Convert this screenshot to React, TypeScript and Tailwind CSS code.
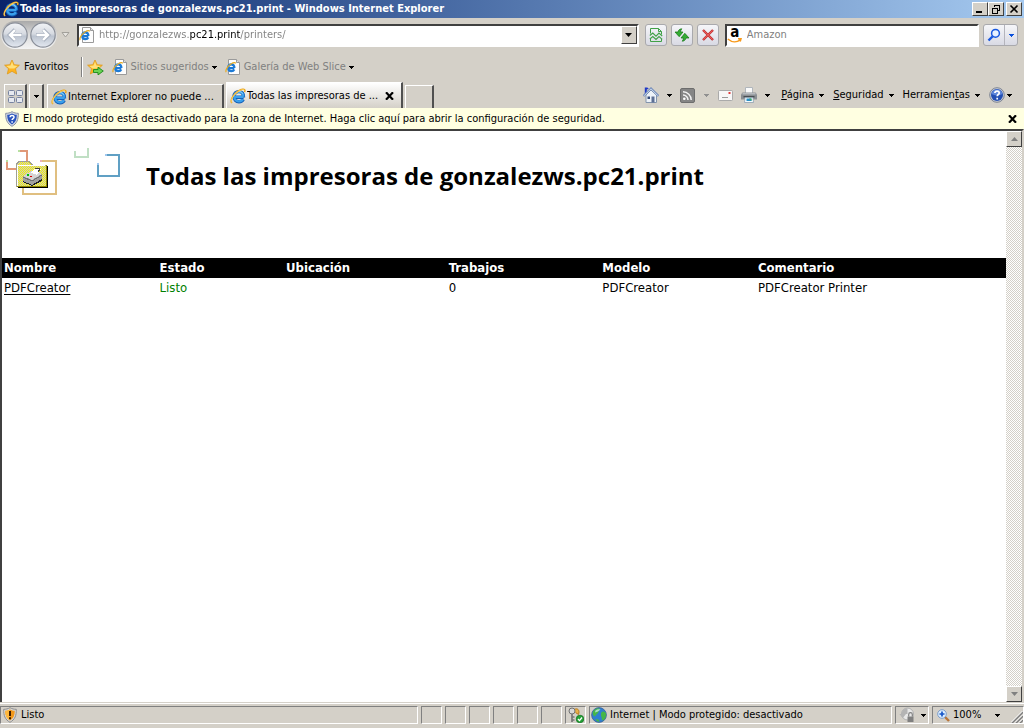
import React from "react";

type IconProps = { className?: string };

const inset = "border border-t-[#808080] border-l-[#808080] border-r-white border-b-white";
const raised = "border border-t-white border-l-white border-r-[#404040] border-b-[#404040]";

function IeIcon({ className = "size-4" }: IconProps) {
  return (
    <svg viewBox="0 0 16 16" className={`shrink-0 ${className}`} aria-hidden="true">
      <path d="M13.600 9.300H5M13.500 9.300C13.700 5.400 11.700 3.600 8.900 3.600 6 3.600 4 5.700 4 8.700c0 3 2 5 5 5 2.100 0 3.600-1 4.200-2.400" fill="none" stroke="#1460b8" strokeWidth="3.400" />
      <path d="M13.400 9H5M13.300 8.800C13.300 5.500 11.500 3.800 8.900 3.800 6.200 3.800 4.200 5.900 4.200 8.600c0 2.800 2 4.700 4.700 4.700 1.900 0 3.300-.8 3.900-2.100" fill="none" stroke="#3aa0ec" strokeWidth="2.200" />
      <path d="M4.300 7.200C4.900 5 6.700 3.500 8.900 3.500c1.800 0 3.200.8 3.900 2.200" fill="none" stroke="#9edcff" strokeWidth="1" />
      <path d="M2 15C-.4 13 2.800 6.400 8.400 3c3-1.900 6.200-2.500 6.500-.8.1.6-.1 1.300-.4 1.900" fill="none" stroke="#e9a31c" strokeWidth="1.500" />
      <path d="M1.800 14.600C0 12.500 3.500 6.500 8.700 3.200c2.700-1.600 5.200-2 5.600-1.100" fill="none" stroke="#ffe07a" strokeWidth="0.800" />
    </svg>
  );
}

function PageIeIcon() {
  return (
    <svg viewBox="0 0 16 16" className="size-4 shrink-0" aria-hidden="true">
      <path d="M3.500.5h8l3 3v12h-11z" fill="#fdfdfd" stroke="#9a9a9a" />
      <path d="M11.500.5v3h3" fill="#e0e0e0" stroke="#9a9a9a" />
      <path d="M9.300 9.100H3.400M9.400 9C9.400 6.600 8.200 5.300 6.400 5.300 4.500 5.300 3.200 6.700 3.200 8.800s1.300 3.400 3.200 3.400c1.400 0 2.400-.6 2.900-1.600" fill="none" stroke="#1c7ad6" strokeWidth="2.200" />
      <path d="M1.200 13.200C0 11.400 2.700 6.800 6.300 4.800c2.300-1.400 4.100-1.600 4.300-.3" fill="none" stroke="#e8ab22" strokeWidth="1.200" />
    </svg>
  );
}

function Caret({ className = "text-black" }: IconProps) {
  return (
    <svg viewBox="0 0 5 3" className={`h-[3px] w-[5px] shrink-0 ${className}`} shapeRendering="crispEdges" aria-hidden="true">
      <path d="M0 0h5v1H0zM1 1h3v1H1zM2 2h1v1H2z" fill="currentColor" />
    </svg>
  );
}

function BoldX() {
  return (
    <svg viewBox="0 0 9 8" className="h-2 w-[9px] shrink-0" aria-hidden="true">
      <path d="M1 .3l7 7.400M8 .3L1 7.700" stroke="#000" strokeWidth="2.200" />
    </svg>
  );
}

function NavArrow({ flip = false }: { flip?: boolean }) {
  return (
    <svg viewBox="0 0 26 26" className="size-[26px]" aria-hidden="true">
      <defs>
        <linearGradient id={flip ? "nf" : "nb"} x1="0" y1="0" x2="0" y2="1">
          <stop offset="0" stopColor="#f2f4f7" />
          <stop offset=".45" stopColor="#d6dae1" />
          <stop offset=".55" stopColor="#bcc4d0" />
          <stop offset="1" stopColor="#e4e9f1" />
        </linearGradient>
      </defs>
      <circle cx="13" cy="13" r="12.200" fill={flip ? "url(#nf)" : "url(#nb)"} stroke="#8a8f99" strokeWidth="1.200" />
      <path
        d={flip ? "M6 13h12.500M13 7.500l5.500 5.500-5.500 5.500" : "M20 13H7.500M13 7.500L7.500 13l5.500 5.500"}
        fill="none" stroke="#a9b1bf" strokeWidth="3.800" />
      <path
        d={flip ? "M6.500 13h12M13 8l5 5-5 5" : "M19.500 13H8M13 8l-5 5 5 5"}
        fill="none" stroke="#fff" strokeWidth="2.400" />
    </svg>
  );
}

function Star({ arrow = false }: { arrow?: boolean }) {
  return (
    <svg viewBox="0 0 17 17" className="size-[17px] shrink-0" aria-hidden="true">
      <path d="M8 1l2.200 4.700 5.200.5-3.900 3.500 1.200 5.300L8 12.300 3.300 15l1.200-5.300L.6 6.200l5.200-.5z" fill="#ffb31f" stroke="#dd9a1e" strokeWidth=".8" />
      <path d="M8 2.600l1.500 3.900 4.200.4-3.400 2.600H5.600L2.300 6.900l4.200-.4z" fill="#ffe07a" />
      {arrow && <path d="M6.500 10.500h4.500V8.200l5.300 3.800-5.300 3.900v-2.400H6.500z" fill="#6bd354" stroke="#1b8a1b" strokeWidth=".9" />}
    </svg>
  );
}

function HelpDot() {
  return (
    <svg viewBox="0 0 16 16" className="size-4 shrink-0" aria-hidden="true">
      <circle cx="8" cy="8" r="7.300" fill="#c9cdd6" stroke="#7d8492" />
      <circle cx="8" cy="8" r="6" fill="#2450b4" />
      <path d="M2.600 7a5.500 5.500 0 0 1 10.800 0c-3 1.800-7.500 1.800-10.800 0z" fill="#5d86da" />
      <path d="M5.900 6.100c0-2.700 4.300-2.700 4.300-.2 0 1.600-2 1.600-2 3.300M8.200 10.700v1.700" fill="none" stroke="#fff" strokeWidth="1.700" />
    </svg>
  );
}

function ShieldHelp() {
  return (
    <svg viewBox="0 0 14 16" className="h-4 w-3.5 shrink-0" aria-hidden="true">
      <path d="M7 .7c2 1.200 4 1.600 6.300 1.600.2 6-1.300 10.300-6.300 13C2 12.600.5 8.300.7 2.300 3 2.300 5 1.900 7 .7z" fill="#d5dae4" stroke="#8790a3" />
      <path d="M7 2.400c1.600.8 3 1.200 4.800 1.300 0 4.600-1.300 7.800-4.800 9.900-3.500-2.100-4.800-5.300-4.800-9.900C4 3.600 5.400 3.200 7 2.400z" fill="#2a55bd" />
      <path d="M5.100 6.300c0-2.400 3.900-2.400 3.900-.1 0 1.400-1.900 1.500-1.900 2.800M7.100 10.200v1.600" fill="none" stroke="#fff" strokeWidth="1.500" />
    </svg>
  );
}

function ShieldWarn() {
  return (
    <svg viewBox="0 0 14 16" className="h-4 w-3.5 shrink-0" aria-hidden="true">
      <path d="M7 .7c2 1.200 4 1.600 6.300 1.600.2 6-1.300 10.300-6.300 13C2 12.600.5 8.300.7 2.300 3 2.300 5 1.900 7 .7z" fill="#d8d8d8" stroke="#8e8e8e" />
      <path d="M7 2.400c1.600.8 3 1.200 4.800 1.300 0 4.600-1.300 7.800-4.800 9.900-3.500-2.100-4.800-5.300-4.800-9.900C4 3.600 5.400 3.200 7 2.400z" fill="#f2981a" />
      <path d="M7 2.400v11.200c-3.500-2.100-4.800-5.300-4.800-9.900C4 3.600 5.400 3.200 7 2.400z" fill="#ffb83d" />
      <path d="M7 4v5M7 10.300v2" stroke="#3b1c00" strokeWidth="2" />
    </svg>
  );
}

function PrintersBanner() {
  return (
    <svg viewBox="0 0 120 50" className="h-[50px] w-[120px] shrink-0" shapeRendering="crispEdges" role="img" aria-label="Impresoras">
      <defs>
        <pattern id="dither" width="2" height="2" patternUnits="userSpaceOnUse">
          <path d="M0 0h2v2H0z" fill="#c8c8c8" />
          <path d="M0 0h1v1H0zM1 1h1v1H1z" fill="#f8f400" />
        </pattern>
      </defs>
      <g fill="none" strokeWidth="2">
        <path d="M16 5h9v10M5 15v8h9" stroke="#e09878" />
        <path d="M16 5h2M5 14v2" stroke="#b8e0a0" />
        <path d="M38 15h16v33H21v-7" stroke="#e0bf80" />
        <path d="M38 15h2" stroke="#e8b0b8" />
        <path d="M73 5v6h13V2" stroke="#c0dfc4" />
        <path d="M104 9h13v21H96V18" stroke="#60a0c4" />
        <path d="M103 9h2M96 17v2" stroke="#a0c8f0" />
      </g>
      <path d="M14 41V18l4-3h9l4 4h14v22z" fill="url(#dither)" />
      <path d="M14.500 41V18l3-3h9l4 4H44" fill="none" stroke="#a0a090" />
      <path d="M15.500 40V19.500H43" fill="none" stroke="#fff" />
      <path d="M15 40.500h29.500V19" fill="none" stroke="#8c8400" />
      <path d="M16 41.500h29.500V20" fill="none" stroke="#000" />
      <path d="M21 30l9-5 10 3v5l-10 6-9-4z" fill="#a0a0a0" />
      <path d="M21 30l9-5 10 3-10 6z" fill="#d4d4d4" />
      <path d="M21 35l9 4 10-6v2l-10 5-9-4z" fill="#202020" />
      <path d="M21 31l9 4 10-6" fill="none" stroke="#707070" />
      <path d="M29 27l4-5 6 1-4 6z" fill="#fff" />
      <path d="M33 22l5 1-2 3" fill="none" stroke="#404040" />
      <path d="M25 28h2v2h-2z" fill="#00c000" />
      <path d="M28 30h2v1h-2z" fill="#e00000" />
    </svg>
  );
}

function HomeIcon() {
  return (
    <svg viewBox="0 0 16 16" className="size-4" aria-hidden="true">
      <path d="M3 8l5-5 5.500 5v7.500H3z" fill="#edf2f8" stroke="#8294ad" />
      <path d="M1.800.5h2.500l1.500 1.200L3.800 2.500V7H1.800z" fill="#1f38c5" />
      <path d="M.5 9L8 1.500 15.500 9" fill="none" stroke="#6c86b6" strokeWidth="2" />
      <path d="M1 8.800L8 1.800l7 7" fill="none" stroke="#d3e0f3" strokeWidth="1" />
      <path d="M8.500 9.500h3v6h-3z" fill="#5c6f94" />
      <path d="M4.500 9.500h2.500v2.500H4.500z" fill="#304878" />
    </svg>
  );
}

function RssIcon() {
  return (
    <svg viewBox="0 0 15 15" className="size-[15px]" aria-hidden="true">
      <rect x=".5" y=".5" width="14" height="14" rx="1.500" fill="#858585" stroke="#6d6d6d" />
      <circle cx="4.300" cy="10.700" r="1.300" fill="#fff" />
      <path d="M3 7a5 5 0 0 1 5 5M3 3.800A8.200 8.200 0 0 1 11.200 12" fill="none" stroke="#f2f2f2" strokeWidth="1.500" />
    </svg>
  );
}

function MailIcon() {
  return (
    <svg viewBox="0 0 15 11" className="h-[11px] w-[15px]" aria-hidden="true">
      <rect x=".5" y=".5" width="14" height="10" rx=".8" fill="#f7f7f7" stroke="#aaa" />
      <path d="M10.500 2h2v2h-2z" fill="#e13a3a" />
      <path d="M4 7.500h6" stroke="#999" />
    </svg>
  );
}

function PrinterIcon() {
  return (
    <svg viewBox="0 0 16 16" className="size-4" aria-hidden="true">
      <path d="M4.500.5h7v6h-7z" fill="#fafafa" stroke="#b0b6bc" />
      <path d="M1.500 5.500h13l1.500 2v5H0v-5z" fill="#8b8f93" />
      <path d="M1.500 6h13v1.500h-13z" fill="#b7bbbf" />
      <path d="M2.500 9h11v1.500h-11z" fill="#4a4e52" />
      <path d="M4 10.500h8l.5 5h-9z" fill="#f4fbff" stroke="#8fa0ae" strokeWidth=".8" />
      <path d="M5.500 11.500h5v2.500h-5z" fill="#2a8fc4" />
      <path d="M8 11.500h2.500v2.500z" fill="#49b25c" />
    </svg>
  );
}

function CompatIcon() {
  return (
    <svg viewBox="0 0 14 16" className="h-4 w-3.5" aria-hidden="true">
      <path d="M1.500 6.500v-5h8l3 3v3M1.500 12v2.500h11V12" fill="none" stroke="#41a147" />
      <path d="M9.500 1.500v3h3" fill="none" stroke="#41a147" />
      <path d="M.8 8.500l3-2.500 3.200 3.200L10 6l3.200 3M.8 12l3-2.500L7 12.500 10 9.500l3.200 2.800" fill="none" stroke="#41a147" strokeWidth="1.100" />
    </svg>
  );
}

function RefreshIcon() {
  return (
    <svg viewBox="0 0 16 14" className="h-3.5 w-4" aria-hidden="true">
      <path d="M7.800.8C6 .8 4.300 2 4 4H1l4.200 4.700L9 4H6.600C6.600 2.600 7 1.600 7.800.8z" fill="#35ad35" stroke="#127412" strokeWidth=".7" />
      <path d="M8.200 13.200c1.800 0 3.500-1.200 3.800-3.200h3l-4.200-4.700L7 10h2.400c0 1.400-.4 2.400-1.200 3.200z" fill="#35ad35" stroke="#127412" strokeWidth=".7" />
    </svg>
  );
}

function StopIcon() {
  return (
    <svg viewBox="0 0 12 12" className="size-3" aria-hidden="true">
      <path d="M1 1l10 10M11 1L1 11" stroke="#b52a2a" strokeWidth="2.400" />
      <path d="M1.300 1.300l9.400 9.400M10.700 1.300l-9.400 9.400" stroke="#ec5a5a" strokeWidth="1.200" />
    </svg>
  );
}

function SearchIcon() {
  return (
    <svg viewBox="0 0 14 14" className="size-3.5" aria-hidden="true">
      <path d="M6 8L1.500 12.500" stroke="#1757e0" strokeWidth="2.400" />
      <circle cx="8.500" cy="5.300" r="3.900" fill="#e7f1ff" stroke="#1757e0" strokeWidth="1.500" />
    </svg>
  );
}

function AmazonIcon() {
  return (
    <span className="flex w-4 shrink-0 flex-col items-center" aria-hidden="true">
      <span className="h-2.5 text-[15px] leading-[8px] font-bold">a</span>
      <svg viewBox="0 0 15 5" className="h-[5px] w-[15px]">
        <path d="M.8 1c4 3.400 9 3.400 12.500.8M11 .8h3l-.8 2.700" fill="none" stroke="#f79a1c" strokeWidth="1.500" />
      </svg>
    </span>
  );
}

function GlobeIcon() {
  return (
    <svg viewBox="0 0 16 16" className="size-4 shrink-0" aria-hidden="true">
      <circle cx="8" cy="8" r="7.400" fill="#2f7fd0" stroke="#3c5f96" strokeWidth=".8" />
      <path d="M2 4.500C4 1.500 7 .8 8.500 1.500 9 3.500 7.500 4 7 6c-1.500 1-2.500 3-3.500 3.500C2 8.500 1.300 6.500 2 4.500zM10 6c2-2.500 4-1.500 5 .5.500 3-1 6-3 7-1.800-.5-.8-3-2-4.500zM4.500 12l3 .5 1 2.300c-2 .2-3.500-1-4-2.800z" fill="#45b649" />
      <path d="M4.500 3.500C6 2 8.500 2 9.500 2.500 8 4 6 5 4 5.500z" fill="#d4f0ff" opacity=".7" />
    </svg>
  );
}

function KeyIcon() {
  return (
    <svg viewBox="0 0 16 16" className="size-4" aria-hidden="true">
      <path d="M6 2.500c4-2 6 1 4.500 5l-3-2" fill="#e9b14a" stroke="#b5791d" />
      <circle cx="4" cy="4" r="3" fill="#d9d9d9" stroke="#707070" />
      <path d="M4 7v8M4.500 10h2M4.500 13h2" stroke="#777" strokeWidth="1.700" />
      <circle cx="12" cy="12" r="3.800" fill="#24a336" stroke="#0d6b1c" strokeWidth=".7" />
      <path d="M10 12l1.500 1.600L14 10.500" fill="none" stroke="#fff" strokeWidth="1.300" />
    </svg>
  );
}

function PrivacyIcon() {
  return (
    <svg viewBox="0 0 16 16" className="size-4" aria-hidden="true">
      <circle cx="8.500" cy="7" r="6" fill="#e8e8e8" stroke="#b0b0b0" />
      <path d="M8.500 7V1A6 6 0 0 0 2.500 7H.3l3.500 4L7 7z" fill="#b4b4b4" />
      <path d="M8.500 9.500h6v5.500h-6z" fill="#808080" />
      <path d="M9.700 9.500v-2a1.800 1.800 0 0 1 3.600 0v2" fill="none" stroke="#808080" strokeWidth="1.200" />
    </svg>
  );
}

function ZoomIcon() {
  return (
    <svg viewBox="0 0 13 13" className="size-[13px] shrink-0" aria-hidden="true">
      <path d="M8 8l4 4" stroke="#b9763a" strokeWidth="2.400" />
      <circle cx="5" cy="5" r="4.300" fill="#dceeff" stroke="#7c9cc9" />
      <path d="M5 2.500v5M2.500 5h5" stroke="#1757c8" strokeWidth="1.700" />
    </svg>
  );
}

function WindowButton({ label, children }: { label: string; children: React.ReactNode }) {
  return (
    <button aria-label={label} className={`flex h-3.5 w-4 items-center justify-center bg-[#d4d0c8] ${raised}`}>
      <svg viewBox="0 0 12 10" className="h-2.5 w-3" shapeRendering="crispEdges" fill="none" stroke="#000" aria-hidden="true">
        {children}
      </svg>
    </button>
  );
}

function TitleBar() {
  return (
    <header className="flex h-[18px] items-center bg-linear-to-r from-[#0a246a] to-[#a6caf0] pr-0.5 pl-[3px]">
      <IeIcon />
      <h1 className="ml-px flex-1 font-bold text-white">Todas las impresoras de gonzalezws.pc21.print - Windows Internet Explorer</h1>
      <WindowButton label="Minimizar"><path d="M2 8h6" strokeWidth="2" /></WindowButton>
      <WindowButton label="Restaurar"><path d="M4 1h6M4.500 1v2M9.500 1v5.500H8M2 4h6M2.500 4v5.500h5V4" /></WindowButton>
      <span className="w-0.5" />
      <WindowButton label="Cerrar"><path d="M2.500 1.500l7 7M9.500 1.500l-7 7" strokeWidth="1.600" shapeRendering="auto" /></WindowButton>
    </header>
  );
}

function ToolButton({ label, children }: { label: string; children: React.ReactNode }) {
  return (
    <button
      aria-label={label}
      className="flex h-[22px] w-[22px] items-center justify-center rounded-[3px] border border-[#a9a9ad] bg-linear-to-b from-[#f6f6f9] to-[#d9dae4]"
    >
      {children}
    </button>
  );
}

function AddressRow() {
  return (
    <div className="flex h-[34px] items-center pr-1.5 pl-px">
      <nav className="flex h-7 items-center gap-0.5 rounded-full bg-linear-to-b from-[#a9a9a9] via-[#dcdcdc] to-[#f4f4f4] px-px" aria-label="Historial">
        <button aria-label="Atrás"><NavArrow /></button>
        <button aria-label="Adelante"><NavArrow flip /></button>
      </nav>
      <button aria-label="Páginas recientes" className="mr-1.5 ml-0.5 flex h-4 w-3 items-center justify-center">
        <svg viewBox="0 0 9 6" className="h-1.5 w-[9px]" aria-hidden="true"><path d="M1 .5h7L4.500 5z" fill="#e6e4e0" stroke="#a2a09a" /></svg>
      </button>
      <div className="flex h-[23px] min-w-0 flex-1 items-center border-2 border-t-[#404040] border-r-white border-b-white border-l-[#404040] bg-white">
        <PageIeIcon />
        <input
          aria-label="Dirección"
          defaultValue="http://gonzalezws.pc21.print/printers/"
          className="ml-1 min-w-0 flex-1 bg-[linear-gradient(90deg,#808080_91px,#000_91px,#000_141px,#808080_141px)] bg-clip-text text-transparent caret-black outline-none"
        />
        <button aria-label="Mostrar direcciones" className={`flex h-[18px] w-4 items-center justify-center bg-[#d4d0c8] ${raised}`}>
          <svg viewBox="0 0 7 4" className="h-1 w-[7px]" aria-hidden="true"><path d="M0 0h7L3.500 4z" /></svg>
        </button>
      </div>
      <div className="ml-1.5 flex gap-1">
        <ToolButton label="Vista de compatibilidad"><CompatIcon /></ToolButton>
        <ToolButton label="Actualizar"><RefreshIcon /></ToolButton>
        <ToolButton label="Detener"><StopIcon /></ToolButton>
      </div>
      <div className="ml-1.5 flex h-[23px] w-1/4 items-center border-2 border-t-[#404040] border-r-white border-b-white border-l-[#404040] bg-white">
        <AmazonIcon />
        <input aria-label="Buscar" placeholder="Amazon" className="ml-1 min-w-0 flex-1 placeholder:text-[#808080] outline-none" />
      </div>
      <div className="ml-1 flex h-[22px] rounded-[3px] border border-[#a9a9ad] bg-linear-to-b from-[#f6f6f9] to-[#d9dae4]">
        <button aria-label="Buscar en Amazon" className="flex w-5 items-center justify-center"><SearchIcon /></button>
        <button aria-label="Opciones de búsqueda" className="flex w-[13px] items-center justify-center border-l border-[#b4b4bc]"><Caret className="text-[#0a50dc]" /></button>
      </div>
    </div>
  );
}

function FavoritesRow() {
  return (
    <div className="flex h-[30px] items-center pl-1">
      <button className="flex items-center gap-[3px]"><Star />Favoritos</button>
      <span className="ml-3 h-5 w-0.5 border-l border-[#808080] bg-white" />
      <button aria-label="Agregar a favoritos" className="ml-1"><Star arrow /></button>
      <button className="ml-2 flex items-center gap-[3px] text-[#808080]"><PageIeIcon />Sitios sugeridos<Caret className="text-black" /></button>
      <button className="ml-2 flex items-center gap-[3px] text-[#808080]"><PageIeIcon />Galería de Web Slice<Caret className="text-black" /></button>
    </div>
  );
}

function CommandBar() {
  return (
    <div className="ml-auto flex h-[26px] items-center pr-3">
      <button aria-label="Página principal" className="flex items-center gap-2"><HomeIcon /><Caret /></button>
      <button aria-label="Fuentes" className="ml-2 flex items-center gap-[9px]"><RssIcon /><Caret className="text-[#909090]" /></button>
      <button aria-label="Leer correo" className="ml-[9px]"><MailIcon /></button>
      <button aria-label="Imprimir" className="ml-2 flex items-center gap-2"><PrinterIcon /><Caret /></button>
      <button className="ml-[11px] flex items-center gap-[5px]"><span><u>P</u>ágina</span><Caret /></button>
      <button className="ml-[9px] flex items-center gap-[5px]"><span><u>S</u>eguridad</span><Caret /></button>
      <button className="ml-[9px] flex items-center gap-[5px]"><span>Herramien<u>t</u>as</span><Caret /></button>
      <button aria-label="Ayuda" className="ml-[9px] flex items-center gap-0.5"><HelpDot /><Caret /></button>
    </div>
  );
}

function TabRow() {
  return (
    <div className="flex h-[26px] items-end pl-1">
      <button aria-label="Pestañas rápidas" className="flex h-6 w-[23px] items-center justify-center border-t border-r-2 border-l border-t-white border-r-[#505050] border-l-white">
        <svg viewBox="0 0 15 13" className="h-[13px] w-[15px]" fill="#e6e9f0" stroke="#7783a0" aria-hidden="true">
          <rect x=".5" y=".5" width="6" height="5" rx="1" /><rect x="8.500" y=".5" width="6" height="5" rx="1" />
          <rect x=".5" y="7.500" width="6" height="5" rx="1" /><rect x="8.500" y="7.500" width="6" height="5" rx="1" />
        </svg>
      </button>
      <button aria-label="Lista de pestañas" className="ml-0.5 flex h-6 w-[15px] items-center justify-center border-t border-r-2 border-l border-t-white border-r-[#505050] border-l-white"><Caret /></button>
      <div role="tablist" className="ml-[3px] flex items-end gap-0.5">
        <button role="tab" aria-selected="false" className="flex h-6 w-[177px] items-center gap-px border-t border-r-2 border-l border-t-white border-r-[#505050] border-l-white pl-[3px]">
          <IeIcon /><span className="truncate">Internet Explorer no puede ...</span>
        </button>
        <div className="flex h-[26px] w-[177px] items-center border-t border-r-2 border-l border-t-white border-r-[#505050] border-l-white bg-linear-to-b from-white to-[#d4d0c8] pl-[3px]">
          <button role="tab" aria-selected="true" className="flex min-w-0 flex-1 items-center gap-px text-left"><IeIcon /><span className="truncate">Todas las impresoras de ...</span></button>
          <button aria-label="Cerrar pestaña" className="mr-1.5 p-px"><BoldX /></button>
        </div>
        <button aria-label="Nueva pestaña" className="h-[23px] w-[29px] border-t border-r-2 border-l border-t-white border-r-[#505050] border-l-white" />
      </div>
      <CommandBar />
    </div>
  );
}

function InfoBar() {
  return (
    <div className="flex h-[21px] items-center bg-[#ffffe1] pr-[7px] pl-[5px]">
      <button className="flex flex-1 items-center gap-1 text-left"><ShieldHelp />El modo protegido está desactivado para la zona de Internet. Haga clic aquí para abrir la configuración de seguridad.</button>
      <button aria-label="Cerrar aviso"><BoldX /></button>
    </div>
  );
}

function ScrollBar() {
  return (
    <div className="flex w-4 shrink-0 flex-col justify-between bg-[repeating-conic-gradient(#d4d0c8_0_25%,#fff_0_50%)] bg-[length:2px_2px]">
      <button aria-label="Subir" className={`flex size-4 items-center justify-center bg-[#d4d0c8] ${raised}`}>
        <svg viewBox="0 0 7 4" className="h-1 w-[7px]" aria-hidden="true"><path d="M0 4h7L3.500 0z" fill="#808080" /></svg>
      </button>
      <button aria-label="Bajar" className={`flex size-4 items-center justify-center bg-[#d4d0c8] ${raised}`}>
        <svg viewBox="0 0 7 4" className="h-1 w-[7px]" aria-hidden="true"><path d="M0 0h7L3.500 4z" fill="#808080" /></svg>
      </button>
    </div>
  );
}

const columns = [
  { title: "Nombre", width: "w-[15.5%]" },
  { title: "Estado", width: "w-[12.6%]" },
  { title: "Ubicación", width: "w-[16.2%]" },
  { title: "Trabajos", width: "w-[15.3%]" },
  { title: "Modelo", width: "w-[15.5%]" },
  { title: "Comentario", width: "w-[24.9%]" },
];

function PrinterPage() {
  return (
    <main className="min-w-0 flex-1 bg-white">
      <div className="flex h-[127px] items-start pt-[15px]">
        <PrintersBanner />
        <h2 className="ml-6 pt-[15px] font-['Open_Sans','Noto_Sans',sans-serif] text-[24px] leading-[30px] font-bold">Todas las impresoras de gonzalezws.pc21.print</h2>
      </div>
      <table className="w-full table-fixed border-collapse text-left text-[13px] leading-[18px]">
        <thead className="bg-black text-white">
          <tr>
            {columns.map((c) => <th key={c.title} className={`h-5 px-0.5 font-bold ${c.width}`}>{c.title}</th>)}
          </tr>
        </thead>
        <tbody>
          <tr>
            <td className="h-5 px-0.5"><a href="#pdfcreator" className="underline underline-offset-2">PDFCreator</a></td>
            <td className="px-0.5 text-[#008000]">Listo</td>
            <td />
            <td className="px-0.5">0</td>
            <td className="px-0.5">PDFCreator</td>
            <td className="px-0.5">PDFCreator Printer</td>
          </tr>
        </tbody>
      </table>
    </main>
  );
}

function StatusBar() {
  return (
    <footer className="border-t border-white pt-0.5 pb-1">
      <div className="flex h-[18px] gap-[3px]">
        <div className={`flex flex-1 items-center gap-1 pl-0.5 ${inset}`}><ShieldWarn />Listo</div>
        {[0, 1, 2, 3, 4, 5].map((n) => <div key={n} className={`w-[21px] ${inset}`} />)}
        <div className={`flex w-[21px] items-center justify-center ${inset}`}><KeyIcon /></div>
        <div className={`flex w-[303px] items-center gap-[3px] pl-px ${inset}`}><GlobeIcon />Internet | Modo protegido: desactivado</div>
        <button aria-label="Privacidad" className={`flex w-[34px] items-center justify-center gap-1.5 ${inset}`}><PrivacyIcon /><Caret /></button>
        <button className={`flex w-[92px] items-center pl-1 ${inset}`}>
          <ZoomIcon /><span className="ml-[3px]">100%</span><Caret className="ml-3.5 text-black" />
          <svg viewBox="0 0 12 12" className="ml-auto size-3 self-end" aria-hidden="true">
            <path d="M1 12L12 1M5 12l7-7M9 12l3-3" stroke="#808080" strokeWidth="1.700" />
            <path d="M0 11.500L11.500 0M4 11.500L12 3.500M8 11.500l4-4" stroke="#fff" />
          </svg>
        </button>
      </div>
    </footer>
  );
}

export default function App() {
  return (
    <div className="flex min-h-screen flex-col bg-[#d4d0c8] font-['DejaVu_Sans_Condensed','DejaVu_Sans',sans-serif] text-[11px] leading-[14px] whitespace-nowrap text-black">
      <TitleBar />
      <AddressRow />
      <FavoritesRow />
      <TabRow />
      <InfoBar />
      <div className="mb-px flex flex-1 border-t-2 border-r-2 border-l-2 border-t-[#404040] border-r-[#d4d0c8] border-l-[#404040]">
        <PrinterPage />
        <ScrollBar />
      </div>
      <StatusBar />
    </div>
  );
}
